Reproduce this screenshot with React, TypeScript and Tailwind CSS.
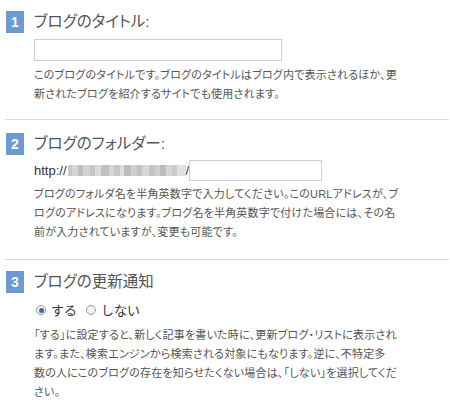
import React from "react";

const FONT = "[font-family:'Liberation_Sans','Noto_Sans_CJK_JP',sans-serif]";

function Badge({ n }: { n: string }) {
  return (
    <div className="w-[18px] h-[22px] bg-[#6b9bd2] flex items-center justify-center text-white font-bold text-[14px] leading-none [font-family:'Liberation_Sans',sans-serif]">
      {n}
    </div>
  );
}

function Header({ n, title }: { n: string; title: string }) {
  return (
    <div className="flex items-center h-[22px] pl-[6px]">
      <Badge n={n} />
      <div className="ml-[10px] text-[15.5px] leading-none text-[#555] [font-feature-settings:'palt']">
        {title}
      </div>
    </div>
  );
}

function Divider() {
  return <div className="ml-[5px] w-[444px] h-px bg-[#d9d9d9]" />;
}

function Desc({ lines, className }: { lines: string[]; className?: string }) {
  return (
    <div
      className={
        "pl-[34px] text-[11px] leading-[19px] tracking-[0.2px] text-[#555] whitespace-nowrap [font-feature-settings:'palt'] " +
        (className ?? "")
      }
    >
      {lines.map((l, i) => (
        <div key={i}>{l}</div>
      ))}
    </div>
  );
}

const blurBlocks: [number, string][] = [
  [4, "#c9c9c9"],
  [6, "#d6d6d6"],
  [5, "#bfbfbf"],
  [7, "#d2d2d2"],
  [5, "#c4c4c4"],
  [6, "#dadada"],
  [8, "#c0c0c0"],
  [5, "#d4d4d4"],
  [6, "#c7c7c7"],
  [4, "#dedede"],
  [7, "#bdbdbd"],
  [6, "#cfcfcf"],
  [5, "#c2c2c2"],
  [7, "#d8d8d8"],
  [6, "#c5c5c5"],
  [5, "#d0d0d0"],
  [6, "#bcbcbc"],
  [6, "#d5d5d5"],
  [5, "#cacaca"],
  [9, "#e0e0e0"],
];

function Radio({ checked }: { checked: boolean }) {
  return (
    <span className="relative inline-flex w-[10px] h-[10px] rounded-full border border-[#9a9a9a] bg-[#f2f2f2] items-center justify-center">
      {checked && <span className="w-[5px] h-[5px] rounded-full bg-[#2f6bb3]" />}
    </span>
  );
}

export default function App() {
  return (
    <div className={"w-[450px] h-[409px] bg-white overflow-hidden " + FONT}>
      {/* Section 1 */}
      <div className="pt-[11px]">
        <Header n="1" title="ブログのタイトル:" />
        <div className="pl-[34px] mt-[6px]">
          <div className="w-[248px] h-[22px] border border-[#cfcfcf] bg-white" />
        </div>
        <Desc
          className="mt-[5px]"
          lines={[
            "このブログのタイトルです。ブログのタイトルはブログ内で表示されるほか、更",
            "新されたブログを紹介するサイトでも使用されます。",
          ]}
        />
      </div>
      <div className="mt-[15px]">
        <Divider />
      </div>

      {/* Section 2 */}
      <div className="pt-[13px]">
        <Header n="2" title="ブログのフォルダー:" />
        <div className="pl-[34px] mt-[5px] flex items-center h-[21px]">
          <span className="text-[13px] text-[#333] leading-none">http://</span>
          <span className="flex h-[11px] ml-[1px] blur-[0.6px]">
            {blurBlocks.map(([w, c], i) => (
              <span key={i} style={{ width: w, backgroundColor: c }} className="h-full" />
            ))}
          </span>
          <span className="text-[13px] text-[#333] leading-none">/</span>
          <div className="w-[133px] h-[21px] border border-[#cfcfcf] bg-white" />
        </div>
        <Desc
          className="mt-[4px]"
          lines={[
            "ブログのフォルダ名を半角英数字で入力してください。このURLアドレスが、ブ",
            "ログのアドレスになります。ブログ名を半角英数字で付けた場合には、その名",
            "前が入力されていますが、変更も可能です。",
          ]}
        />
      </div>
      <div className="mt-[17px]">
        <Divider />
      </div>

      {/* Section 3 */}
      <div className="pt-[11px]">
        <Header n="3" title="ブログの更新通知" />
        <div className="pl-[36px] mt-[9px] h-[16px] flex items-center text-[13px] text-[#333] leading-none">
          <Radio checked />
          <span className="ml-[5px]">する</span>
          <span className="ml-[9px] inline-flex">
            <Radio checked={false} />
          </span>
          <span className="ml-[5px]">しない</span>
        </div>
        <Desc
          className="mt-[8px]"
          lines={[
            "「する」に設定すると、新しく記事を書いた時に、更新ブログ・リストに表示され",
            "ます。また、検索エンジンから検索される対象にもなります。逆に、不特定多",
            "数の人にこのブログの存在を知らせたくない場合は、「しない」を選択してくだ",
            "さい。",
          ]}
        />
      </div>
    </div>
  );
}
